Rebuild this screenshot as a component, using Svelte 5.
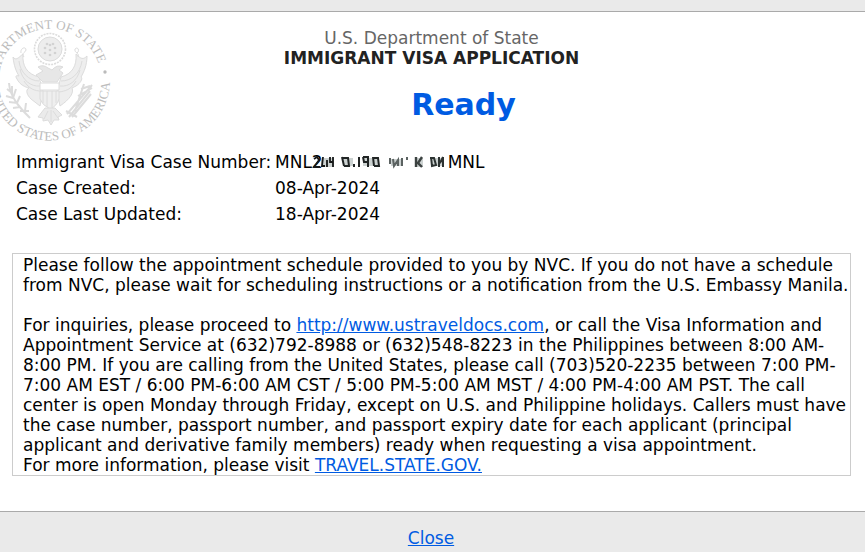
<script>
  const details = [
    { label: 'Case Created:', value: '08-Apr-2024' },
    { label: 'Case Last Updated:', value: '18-Apr-2024' },
  ];
  const stars = [[0, 0], [0, -5], [0, 5], [5, -2], [-5, -2], [5, 3], [-5, 3], [3, -6], [-3, -6]];
</script>

<div class="page">
  <main>
    <svg class="seal" viewBox="-10 18 122 125" role="img" aria-label="Department of State, United States of America">
      <defs>
        <path id="top-arc" d="M2 97 A51 51 0 1 1 101 80" />
        <path id="bottom-arc" d="M-6 59 A60 60 0 1 0 110 80" />
      </defs>
      <g class="ring-text">
        <text text-anchor="end"><textPath href="#top-arc" startOffset="161">DEPARTMENT OF STATE</textPath></text>
        <text text-anchor="end"><textPath href="#bottom-arc" startOffset="208">UNITED STATES OF AMERICA</textPath></text>
      </g>
      <circle cx="105" cy="72" r="1.7" fill="#bbb" />
      <g fill="none" stroke="#dcdcdc" stroke-width="1">
        <circle cx="50" cy="49" r="15.5" stroke-width="1.6" stroke-dasharray="2 1" />
        <circle cx="50" cy="49" r="12" fill="#ededed" />
        <g fill="#d2d2d2" stroke="none">
          {#each stars as [x, y]}<circle cx={50 + x} cy={50 + y} r="1.3" />{/each}
        </g>
        <path fill="#eee" d="M39 77 C27 74 22 66 23 54 C18 58 16 61 13 57 C14 66 16 71 19 76 C16 75 15 76 17 79 C20 85 25 87 29 88 C25 90 27 95 31 99 L40 106 L43 91Z" />
        <path fill="#eee" d="M61 77 C72 74 77 66 76 54 C81 59 83 60 87 56 C87 65 84 72 81 77 C83 78 81 83 76 86 L72 88 C74 93 70 99 60 106 L57 91Z" />
        <path d="M19 61 C20 72 29 81 39 81 M20 69 C22 80 31 87 40 86 M24 81 C29 89 35 91 41 91 M82 61 C80 74 71 81 61 81 M80 70 C77 81 69 87 60 86 M76 81 C71 90 65 91 59 92" />
        <path fill="#e7e7e7" d="M38 67 Q43 64 48 68 L52 70 Q57 64 63 67 L59 70 L63 73 L57 82 H43 L36 75 L43 71Z" />
        <path fill="#fff" d="M40 83 H59 V90 H40Z" />
        <path fill="#efefef" d="M40 91 H59 V99 Q57 106 50 109 Q42 105 40 99Z" />
        <path d="M43 91 V103 M47 91 V107 M52 91 V107 M56 91 V103" />
        <path fill="#ebebeb" d="M45 108 L38 117 L43 118 L43 121 L48 120 L51 125 L54 120 L59 120 L58 117 L62 115 L55 108Z" />
        <path d="M48 111 L44 119 M51 110 V122 M53 111 L58 118" />
        <path d="M21 53 C20 48 26 46 26 50 C25 53 21 53 24 57 M78 57 C80 53 74 53 75 49 C78 46 80 51 77 53" />
        <path stroke-width="2" d="M9 83 C10 97 19 107 30 118 M7 89 L12 93 L12 86 M6 96 L13 98 L16 89 M9 102 L17 103 L20 96 M13 108 L20 107 M25 111 L26 103 M20 111 L29 111" />
        <path stroke-width="2" d="M67 114 L92 85 M69 117 L90 91 M72 117 L91 94 M75 111 L84 84 M78 96 L92 88 M81 89 L90 86 M66 111 L77 117" />
      </g>
    </svg>

    <header>
      <div class="agency">U.S. Department of State</div>
      <h1>IMMIGRANT VISA APPLICATION</h1>
    </header>
    <h2>Ready</h2>

    <dl>
      <dt>Immigrant Visa Case Number:</dt>
      <dd class="case-number">
        <span>MNL2</span>
        <svg class="redacted" viewBox="0 0 121 14" role="img" aria-label="Redacted">
          <path fill="#ccd2d1" d="M-2 3 H11 V12 H-2Z M20 3 H30 V11 H20Z M40 3 H56 V11 H40Z M68 4 H80 V11 H68Z M94 3 H100 V12 H94Z M108 3 H120 V11 H108Z" />
          <g fill="none" stroke="#2c3231" stroke-width="2">
            <path d="M-9 4 L-6 2 L-4 5 L-9 12 H-3 M0 2 L-1 11 H2 M4 5 V12 M7 2 V7 H10 V2 M10 7 V12" stroke="#161818" stroke-width="1.8" />
            <path d="M19 2 L21 11 M19 3 H25 L26 11 H21 M31 9 V12 M36 2 V12 M40 2 L41 7 H45 V2 H40 M45 7 V12 M50 2 L51 11 M50 3 H55 L56 11 H51" stroke="#202424" />
            <path d="M67 3 V9 M70 4 L71 11 L75 5 V11 M79 3 V11 M84 2 V5" stroke="#5b6261" />
            <path d="M93 2 V12 M99 2 L95 8 L99 12" stroke="#3c4241" stroke-width="2.4" />
            <path d="M108 2 L109 11 L113 10 L111 3 H107 M116 2 V12 M120 2 L117 8 M120 2 V12" />
          </g>
        </svg>
        <span>MNL</span>
      </dd>
      {#each details as item}
        <dt>{item.label}</dt>
        <dd>{item.value}</dd>
      {/each}
    </dl>

    <section>
      <p>Please follow the appointment schedule provided to you by NVC. If you do not have a schedule<br />from NVC, please wait for scheduling instructions or a notification from the U.S. Embassy Manila.</p>
      <p class="inquiries">For inquiries, please proceed to <a href="http://www.ustraveldocs.com">http://www.ustraveldocs.com</a>, or call the Visa Information and<br />Appointment Service at (632)792-8988 or (632)548-8223 in the Philippines between 8:00 AM-<br />8:00 PM. If you are calling from the United States, please call (703)520-2235 between 7:00 PM-<br />7:00 AM EST / 6:00 PM-6:00 AM CST / 5:00 PM-5:00 AM MST / 4:00 PM-4:00 AM PST. The call<br />center is open Monday through Friday, except on U.S. and Philippine holidays. Callers must have<br />the case number, passport number, and passport expiry date for each applicant (principal<br />applicant and derivative family members) ready when requesting a visa appointment.</p>
      <p>For more information, please visit <a href="https://travel.state.gov">TRAVEL.STATE.GOV.</a></p>
    </section>
  </main>
  <footer><a href="#close">Close</a></footer>
</div>

<style>
  :global(body) {
    margin: 0;
    background: #eaeaea;
  }
  .page {
    padding-top: 11px;
    font: 17px/20px Verdana, "DejaVu Sans", sans-serif;
    color: #000;
  }
  main {
    position: relative;
    padding: 16px 14px 35px 12px;
    border-top: 1px solid #aaa;
    border-bottom: 1px solid #aaa;
    background: #fff;
  }
  .seal {
    position: absolute;
    left: -10px;
    top: 6px;
    width: 122px;
    height: 125px;
    overflow: visible;
  }
  .ring-text {
    font: 13px "Liberation Serif", serif;
    fill: #bcbcbc;
  }
  header {
    text-align: center;
  }
  .agency {
    color: #666;
  }
  h1 {
    margin: 0;
    font-size: 17px;
    line-height: 20px;
    color: #222;
  }
  h2 {
    margin: 17px 0 0;
    padding-left: 64px;
    font-size: 30px;
    line-height: 40px;
    text-align: center;
    color: #005be2;
  }
  dl {
    display: grid;
    grid-template-columns: 259px 1fr;
    margin: 24px 0 0;
    padding-left: 4px;
    line-height: 26px;
  }
  dt {
    white-space: nowrap;
  }
  dd {
    margin: 0;
  }
  .case-number {
    display: flex;
    align-items: center;
  }
  .redacted {
    width: 121px;
    height: 14px;
    margin-right: 4px;
    overflow: visible;
  }
  section {
    margin-top: 26px;
    padding: 1px 0 0 10px;
    border: 1px solid #ccc;
  }
  p {
    margin: 0;
  }
  .inquiries {
    margin-top: 20px;
  }
  a {
    color: #005be2;
    text-decoration: underline;
  }
  footer {
    padding: 16px 3px 5px 0;
    text-align: center;
  }
</style>
